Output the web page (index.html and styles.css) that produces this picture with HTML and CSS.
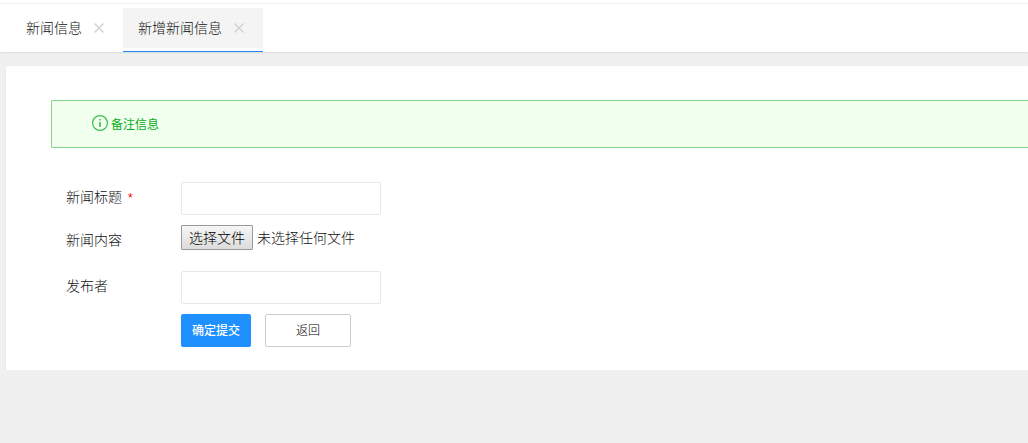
FILE: index.html
```html
<!DOCTYPE html>
<html lang="zh-CN">
<head>
  <meta charset="UTF-8" />
  <meta name="viewport" content="width=device-width, initial-scale=1.0"/>
  <title>新增新闻信息</title>
  <link rel="stylesheet" href="styles.css">
</head>
<body>

  <!-- Tabs -->
  <nav class="tab-bar">
    <a class="tab">
      <span class="tab-title">新闻信息</span>
      <svg class="tab-close" viewBox="0 0 10 10"><path d="M0.5 0.5L9.5 9.5M9.5 0.5L0.5 9.5"/></svg>
    </a>
    <a class="tab active">
      <span class="tab-title">新增新闻信息</span>
      <svg class="tab-close" viewBox="0 0 10 10"><path d="M0.5 0.5L9.5 9.5M9.5 0.5L0.5 9.5"/></svg>
    </a>
  </nav>

  <!-- Form panel -->
  <main class="panel">
    <div class="notice">
      <svg class="notice-icon" viewBox="0 0 16 16">
        <circle cx="8" cy="8" r="7.4"/>
        <path class="notice-mark" d="M8 4v1.6M8 7v5"/>
      </svg>
      <span class="notice-text">备注信息</span>
    </div>

    <form class="news-form">
      <div class="form-row">
        <label for="title">新闻标题 <span class="required">*</span></label>
        <input type="text" id="title" class="text-input" />
      </div>
      <div class="form-row file-row">
        <label>新闻内容</label>
        <button type="button" class="file-btn">选择文件</button>
        <span class="file-name">未选择任何文件</span>
      </div>
      <div class="form-row">
        <label for="author">发布者</label>
        <input type="text" id="author" class="text-input" />
      </div>
      <div class="form-actions">
        <button type="button" class="btn submit-btn">确定提交</button>
        <button type="button" class="btn back-btn">返回</button>
      </div>
    </form>
  </main>

</body>
</html>
```

FILE: styles.css
```css
* {
  box-sizing: border-box;
  margin: 0;
  padding: 0;
}

body {
  background-color: #f0f0f0;
  color: #111;
  font-family: "Noto Sans CJK SC", sans-serif;
  font-size: 14px;
  font-weight: 300;
  overflow: hidden;
}

button,
input {
  font: inherit;
}

/* === TABS === */
.tab-bar {
  display: flex;
  height: 52px;
  padding: 4px 0 0 11px;
  background: linear-gradient(#f2f2f2, #f2f2f2) 0 3px / 100% 1px no-repeat #fff;
  box-shadow: 0 1px 2px rgba(0, 0, 0, 0.1);
}

.tab {
  display: flex;
  align-items: center;
  height: 40px;
  margin-top: 4px;
  padding: 0 19px 0 15px;
  line-height: 40px;
}

.tab-title {
  padding-bottom: 2px;
  line-height: 38px;
}

.tab.active {
  height: 44px;
  padding-bottom: 3px;
  border-bottom: 1px solid #1e88f0;
  background: linear-gradient(#f4f4f4, #f4f4f4) 0 0 / 100% 40px no-repeat;
}

.tab-close {
  width: 10px;
  height: 10px;
  margin: 0 0 0 12px;
  fill: none;
  stroke: #cfcfcf;
  stroke-width: 1.2;
}

/* === PANEL === */
.panel {
  height: 304px;
  margin: 14px 0 0 6px;
  padding: 34px 0 0 45px;
  background: #fff;
  border-radius: 2px 0 0 2px;
  box-shadow: 0 1px 2px rgba(0, 0, 0, 0.08);
}

.notice {
  display: flex;
  align-items: center;
  height: 48px;
  padding-left: 40px;
  border: 1px solid #86d58b;
  border-right: none;
  border-radius: 2px 0 0 2px;
  background: #f0ffee;
  color: #0cad1b;
  font-size: 12px;
  font-weight: 400;
}

.notice-icon {
  width: 16px;
  height: 16px;
  margin: 0 3px 2px 0;
  fill: none;
  stroke: #3fbd4a;
  stroke-width: 1.2;
}

.notice-mark {
  stroke-width: 1.6;
}

.notice-text {
  padding-bottom: 2px;
}

/* === FORM === */
.news-form {
  padding: 34px 0 0 15px;
}

.form-row {
  display: flex;
  align-items: center;
  height: 33px;
}

.form-row label {
  width: 115px;
  padding-bottom: 6px;
}

.required {
  margin-left: 3px;
  color: #f00;
  font-family: "Liberation Sans", sans-serif;
  font-size: 12px;
}

.text-input {
  width: 200px;
  height: 33px;
  padding: 0 10px;
  border: 1px solid #e8e8e8;
  border-radius: 2px;
}

.file-row {
  align-items: flex-start;
  height: 25px;
  margin: 10px 0 21px;
  line-height: 25px;
}

.file-row label {
  padding: 2px 0 0;
}

.file-btn {
  width: 72px;
  height: 25px;
  padding-bottom: 1px;
  border: 1px solid #999;
  border-radius: 1px;
  background: linear-gradient(#f6f6f6, #dcdcdc);
  color: #000;
  line-height: 22px;
}

.file-name {
  margin-left: 4px;
}

.form-actions {
  display: flex;
  gap: 14px;
  padding: 10px 0 0 115px;
}

.btn {
  height: 33px;
  padding-bottom: 2px;
  border: none;
  border-radius: 2px;
  font-size: 12px;
}

.submit-btn {
  width: 70px;
  background: #1e90ff;
  color: #fff;
  font-weight: 500;
}

.back-btn {
  width: 86px;
  border: 1px solid #ccc;
  background: #fff;
  color: #000;
}
```
